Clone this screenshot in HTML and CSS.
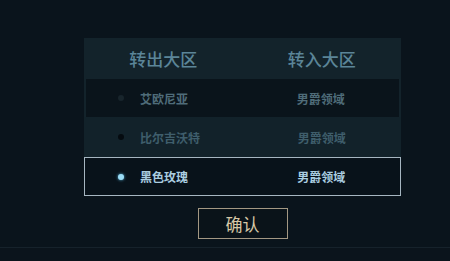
FILE: index.html
```html
<!DOCTYPE html>
<html lang="zh-CN">
<head>
  <meta charset="UTF-8">
  <meta name="viewport" content="width=device-width, initial-scale=1.0">
  <title>大区转移</title>
  <link rel="stylesheet" href="styles.css">
</head>
<body>

  <div class="transfer-wrap">
    <div class="transfer-table">
      <div class="row header-row">
        <div class="cell">转出大区</div>
        <div class="cell">转入大区</div>
      </div>

      <div class="row row-dark">
        <div class="cell cell-from"><span class="dot"></span>艾欧尼亚</div>
        <div class="cell cell-to">男爵领域</div>
      </div>

      <div class="row row-light">
        <div class="cell cell-from"><span class="dot"></span>比尔吉沃特</div>
        <div class="cell cell-to">男爵领域</div>
      </div>

      <div class="row row-selected">
        <div class="cell cell-from"><span class="dot"></span>黑色玫瑰</div>
        <div class="cell cell-to">男爵领域</div>
      </div>
    </div>

    <div class="actions">
      <button class="confirm-btn">确认</button>
    </div>
  </div>

  <div class="footer-line"></div>

</body>
</html>
```

FILE: styles.css
```css
body {
  margin: 0;
  padding: 0;
  background-color: #0a141c;
  font-family: "Noto Sans CJK SC", "Noto Sans", sans-serif;
  height: 261px;
  overflow: hidden;
}

.transfer-wrap {
  width: 317px;
  margin-left: 84px;
  padding-top: 38px;
}

.transfer-table {
  background-color: #13232b;
}

.row {
  display: flex;
  align-items: center;
}

.cell {
  width: 50%;
  box-sizing: border-box;
  text-align: center;
}

.header-row {
  height: 41px;
  font-size: 17px;
  font-weight: 500;
  color: #5b8598;
}

.row-dark,
.row-light,
.row-selected {
  font-size: 12px;
  font-weight: bold;
}

.row-dark {
  height: 38px;
  margin: 0 2px;
  background-color: #0a141b;
  color: #4f6c79;
}

.row-light {
  height: 40px;
  background-color: #12222a;
  color: #3f5e6c;
}

.row-selected {
  height: 37px;
  background-color: #08121a;
  border: 1px solid #a6b6c1;
  color: #aacde0;
}

.cell-from {
  display: flex;
  align-items: center;
  text-align: left;
  padding-left: 34px;
}

.row-dark .cell-from {
  padding-left: 32px;
}

.row-selected .cell-from {
  padding-left: 33px;
}

.cell-to {
  text-align: center;
}

.dot {
  width: 6px;
  height: 6px;
  border-radius: 50%;
  margin-right: 16px;
  background-color: #18252c;
}

.row-light .dot {
  background-color: #050b10;
}

.row-selected .dot {
  background-color: #9bdcf6;
  box-shadow: 0 0 3px #5cb8e0;
}

.actions {
  display: flex;
  justify-content: center;
  padding-top: 12px;
}

.confirm-btn {
  width: 90px;
  height: 31px;
  background-color: #0a1319;
  border: 1px solid #a39883;
  color: #d6c7a6;
  font-family: "Noto Sans CJK SC", sans-serif;
  font-size: 17px;
  padding: 0;
  cursor: pointer;
}

.footer-line {
  margin-top: 8px;
  height: 14px;
  border-top: 1px solid #16222b;
  background-color: #0b141c;
}
```
